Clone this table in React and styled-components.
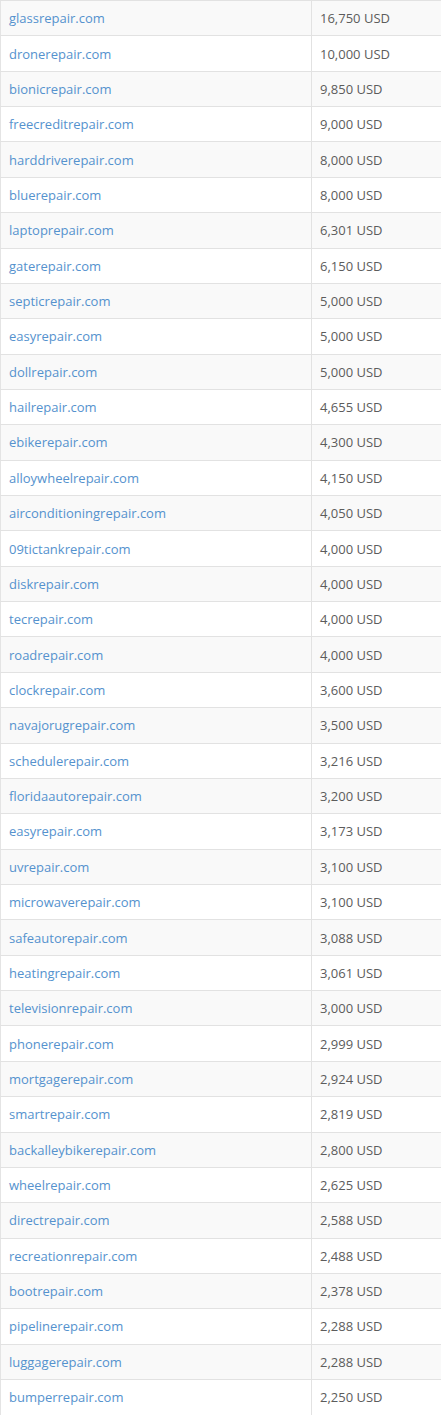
import React from "react";
import styled, { createGlobalStyle } from "styled-components";

const Global = createGlobalStyle`
  html, body { margin: 0; padding: 0; background: #fff; }
  body { font-family: "Open Sans", "Liberation Sans", sans-serif; }
`;

const rows = [
  ["glassrepair.com", "16,750"],
  ["dronerepair.com", "10,000"],
  ["bionicrepair.com", "9,850"],
  ["freecreditrepair.com", "9,000"],
  ["harddriverepair.com", "8,000"],
  ["bluerepair.com", "8,000"],
  ["laptoprepair.com", "6,301"],
  ["gaterepair.com", "6,150"],
  ["septicrepair.com", "5,000"],
  ["easyrepair.com", "5,000"],
  ["dollrepair.com", "5,000"],
  ["hailrepair.com", "4,655"],
  ["ebikerepair.com", "4,300"],
  ["alloywheelrepair.com", "4,150"],
  ["airconditioningrepair.com", "4,050"],
  ["09tictankrepair.com", "4,000"],
  ["diskrepair.com", "4,000"],
  ["tecrepair.com", "4,000"],
  ["roadrepair.com", "4,000"],
  ["clockrepair.com", "3,600"],
  ["navajorugrepair.com", "3,500"],
  ["schedulerepair.com", "3,216"],
  ["floridaautorepair.com", "3,200"],
  ["easyrepair.com", "3,173"],
  ["uvrepair.com", "3,100"],
  ["microwaverepair.com", "3,100"],
  ["safeautorepair.com", "3,088"],
  ["heatingrepair.com", "3,061"],
  ["televisionrepair.com", "3,000"],
  ["phonerepair.com", "2,999"],
  ["mortgagerepair.com", "2,924"],
  ["smartrepair.com", "2,819"],
  ["backalleybikerepair.com", "2,800"],
  ["wheelrepair.com", "2,625"],
  ["directrepair.com", "2,588"],
  ["recreationrepair.com", "2,488"],
  ["bootrepair.com", "2,378"],
  ["pipelinerepair.com", "2,288"],
  ["luggagerepair.com", "2,288"],
  ["bumperrepair.com", "2,250"],
];

const Table = styled.table`
  width: 441px;
  border-collapse: collapse;
  border-spacing: 0;
  border-left: 1px solid #e4e4e4;
  font-size: 13px;
`;

const Row = styled.tr`
  background: ${(p) => (p.$striped ? "#f9f9f9" : "#fff")};
`;

const Cell = styled.td`
  box-sizing: border-box;
  height: 35.36px;
  padding: 0 8px;
  line-height: 18px;
  border-top: 1px solid #e2e2e2;
  vertical-align: middle;
  color: #5c5c5c;
  width: ${(p) => p.$w || "auto"};
  border-right: ${(p) => (p.$divider ? "1px solid #e2e2e2" : "none")};
`;

const Domain = styled.a`
  color: #5592ce;
  text-decoration: none;
`;

export default function App() {
  return (
    <>
      <Global />
      <Table>
        <tbody>
          {rows.map(([d, v], i) => (
            <Row key={i} $striped={i % 2 === 0}>
              <Cell $w="311px" $divider>
                <Domain href="#">{d}</Domain>
              </Cell>
              <Cell>{v} USD</Cell>
            </Row>
          ))}
        </tbody>
      </Table>
    </>
  );
}
